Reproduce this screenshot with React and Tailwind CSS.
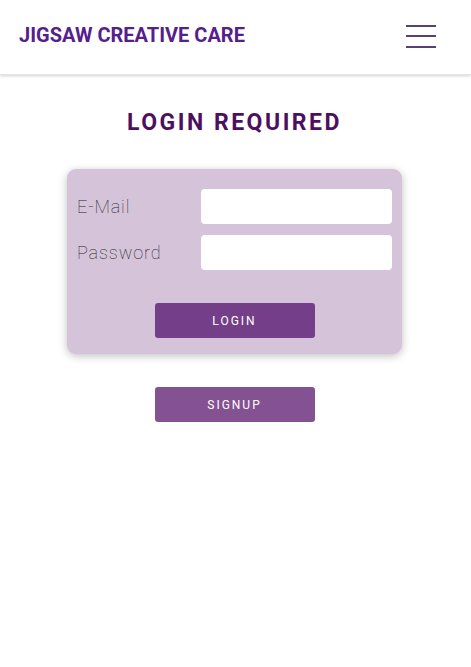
import React from 'react';

const App = () => {
  return (
    <div className="min-h-screen bg-white" style={{ fontFamily: 'Roboto, "Liberation Sans", sans-serif' }}>
      {/* Header */}
      <header className="h-[75px] flex items-center justify-between pl-[19px] pr-[35px] bg-white shadow-[0_1px_3px_rgba(0,0,0,0.18)] border-b border-[#e4e4e4]">
        <div className="text-[20px] font-bold text-[#55208c] leading-none pb-[4px]">JIGSAW CREATIVE CARE</div>
        <button className="w-[30px] flex flex-col gap-[8.5px] pb-[2px]">
          <span className="block h-[2px] bg-[#5b3f6e]" />
          <span className="block h-[2px] bg-[#5b3f6e]" />
          <span className="block h-[2px] bg-[#5b3f6e]" />
        </button>
      </header>

      <main className="flex flex-col items-center pr-[2px]">
        <h1 className="mt-[33px] text-[23px] font-bold tracking-[2.5px] text-[#4d1060] leading-[30px]">LOGIN REQUIRED</h1>

        {/* Login card */}
        <div className="mt-[31px] w-[335px] bg-[#d5c3da] rounded-[9px] shadow-[0_2px_8px_rgba(0,0,0,0.25)] pt-[20px] pb-[16px] pl-[10px] pr-[10px]">
          <div className="flex items-center justify-between">
            <label className="text-[18px] font-thin text-[#1e1e1e] tracking-[0.9px]">E-Mail</label>
            <input className="w-[191px] h-[35px] bg-white rounded-[4px] outline-none" />
          </div>
          <div className="flex items-center justify-between mt-[11px]">
            <label className="text-[18px] font-thin text-[#1e1e1e] tracking-[0.9px]">Password</label>
            <input type="password" className="w-[191px] h-[35px] bg-white rounded-[4px] outline-none" />
          </div>
          <div className="flex justify-center mt-[33px]">
            <button className="w-[160px] h-[35px] bg-[#743f88] text-white text-[12px] tracking-[2px] rounded-[3px]">LOGIN</button>
          </div>
        </div>

        <button className="mt-[33px] w-[160px] h-[35px] bg-[#845293] text-white text-[12px] tracking-[2px] rounded-[3px]">SIGNUP</button>
      </main>
    </div>
  );
};

export default App;
